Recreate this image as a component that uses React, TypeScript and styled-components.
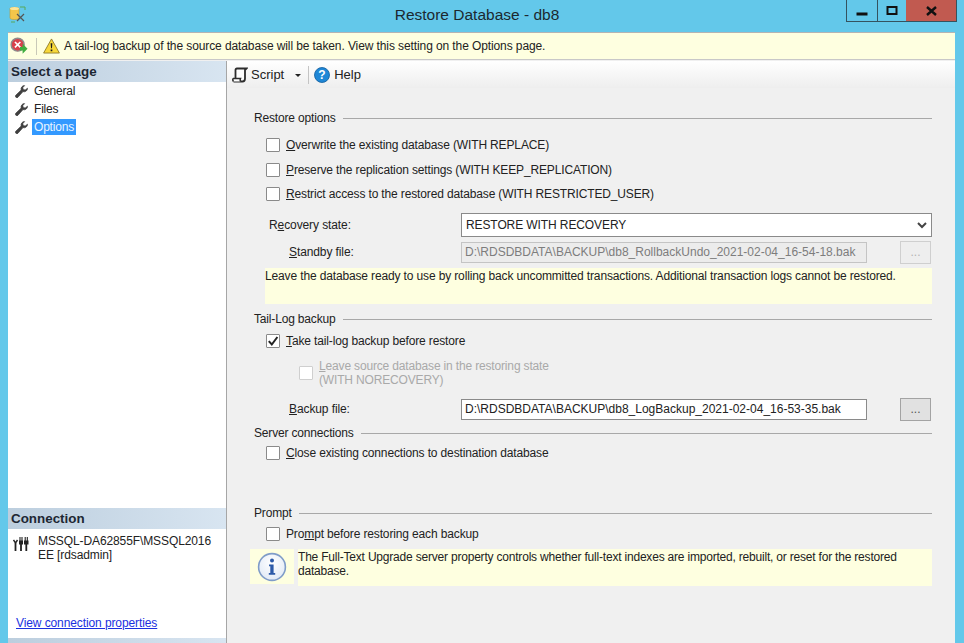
import React from 'react';
import styled, {createGlobalStyle} from 'styled-components';

const GlobalStyle = createGlobalStyle`
  html, body {
    margin: 0;
    padding: 0;
    background: #63c8ea;
  }
  * {
    box-sizing: border-box;
  }
`
const Screen = styled('div')`
  width: 964px;
  height: 643px;
  overflow: hidden;
  display: flex;
  flex-direction: column;
  background: #63c8ea;
  font-family: "Liberation Sans", Arial, sans-serif;
  font-size: 12px;
  color: #222;
`
const TitleBar = styled('div')`
  height: 32px;
  flex: none;
  display: flex;
  align-items: flex-start;
  padding: 5px 7px 0 9px;
`
const Title = styled('div')`
  flex: 1;
  padding: 1px 0 0 81px;
  text-align: center;
  font-size: 15.5px;
  color: #1c2830;
`
const WindowControls = styled('div')`
  display: flex;
  margin-top: -5px;
  height: 22px;
  border: 1px solid #34535f;
  border-top: 0;
`
const ControlButton = styled('div')<{$width: number; $close?: boolean}>`
  width: ${p => p.$width}px;
  display: flex;
  align-items: center;
  justify-content: center;
  background: ${p => p.$close ? '#c15a50' : 'transparent'};
  border-left: ${p => p.$close ? '0' : '1px solid #34535f'};
  &:first-child {
    border-left: 0;
  }
`
const WindowBody = styled('div')`
  flex: 1;
  min-height: 0;
  margin: 0 9px 0 8px;
  display: flex;
  flex-direction: column;
  border-top: 1px solid #b4b4b4;
  background: #f0f0f0;
`
const WarnBar = styled('div')`
  height: 27px;
  flex: none;
  display: flex;
  align-items: center;
  padding: 0 0 0 2px;
  background: #feffe0;
  border-bottom: 1px solid #c8c8c8;
`
const WarnSep = styled('div')`
  width: 1px;
  height: 17px;
  margin: 0 6px 0 8px;
  background: #c9c9b8;
`
const WarnText = styled('span')`
  margin-left: 4px;
  letter-spacing: -0.1px;
`
const Main = styled('div')`
  flex: 1;
  min-height: 0;
  display: flex;
  padding-top: 1px;
`
const SidePanel = styled('div')`
  width: 219px;
  flex: none;
  display: flex;
  flex-direction: column;
  background: #fff;
  border-right: 1px solid #a6a6a6;
`
const SideHeader = styled('div')`
  height: 21px;
  flex: none;
  display: flex;
  align-items: center;
  padding-left: 3px;
  font-size: 13.4px;
  font-weight: 700;
  color: #1d2733;
  background: linear-gradient(90deg, #bccede, #d8e5f1);
`
const PageList = styled('div')`
  flex: 1;
`
const PageRow = styled('div')`
  height: 18px;
  display: flex;
  align-items: center;
  padding-left: 7px;
`
const PageName = styled('span')<{$selected?: boolean}>`
  margin-left: 4px;
  padding: 1px 2px;
  letter-spacing: -0.2px;
  background: ${p => p.$selected ? '#3399ff' : 'transparent'};
  color: ${p => p.$selected ? '#e8f4ff' : '#222'};
`
const ConnectionInfo = styled('div')`
  height: 86px;
  flex: none;
  display: flex;
  align-items: flex-start;
  padding: 5px 0 0 5px;
`
const PlugSvg = styled('svg')`
  flex: none;
  margin-top: 3px;
`
const ConnectionText = styled('div')`
  margin-left: 9px;
  line-height: 14px;
  letter-spacing: -0.1px;
`
const LinkRow = styled('div')`
  height: 16px;
  flex: none;
  padding-left: 8px;
  line-height: 16px;
`
const PropLink = styled('a')`
  color: #1a30e0;
  text-decoration: underline;
  letter-spacing: -0.1px;
`
const BottomStrip = styled('div')`
  height: 5px;
  flex: none;
  margin-top: 7px;
  background: linear-gradient(90deg, #bccede, #d8e5f1);
`
const Content = styled('div')`
  flex: 1;
  min-width: 0;
  display: flex;
  flex-direction: column;
`
const Toolbar = styled('div')`
  height: 27px;
  flex: none;
  display: flex;
  align-items: center;
  padding-left: 5px;
  font-size: 13px;
  background: linear-gradient(180deg, #ffffff, #eeeeee);
`
const ToolLabel = styled('span')`
  margin-left: 3px;
`
const HelpLabel = styled('span')`
  margin-left: 4px;
`
const Caret = styled('span')`
  width: 0;
  height: 0;
  margin: 1px 0 0 11px;
  border: 3px solid transparent;
  border-top: 3px solid #222;
  border-bottom: 0;
`
const ToolSep = styled('div')`
  width: 1px;
  height: 18px;
  margin: 0 5px 0 7px;
  background: #c4c4c4;
`
const Form = styled('div')`
  flex: 1;
  padding: 22px 23px 0 27px;
  display: flex;
  flex-direction: column;
`
const Section = styled('div')<{$top?: number}>`
  height: 16px;
  flex: none;
  margin-top: ${p => p.$top ?? 0}px;
  display: flex;
  align-items: center;
  gap: 7px;
  letter-spacing: -0.17px;
  &::after {
    content: '';
    flex: 1;
    height: 1px;
    background: #a8a8a8;
  }
`
const CheckRow = styled('label')<{$top?: number; $height?: number}>`
  height: ${p => p.$height ?? 24}px;
  flex: none;
  margin-top: ${p => p.$top ?? 0}px;
  display: flex;
  align-items: center;
  padding-left: 12px;
`
const Check = styled('span')<{$disabled?: boolean}>`
  width: 14px;
  height: 14px;
  flex: none;
  margin-right: 6px;
  display: flex;
  align-items: center;
  justify-content: center;
  background: #fff;
  border: 1px solid ${p => p.$disabled ? '#cfcfcf' : '#8a8a8a'};
  border-radius: 1px;
`
const CheckText = styled('span')`
  letter-spacing: -0.14px;
`
const DisabledRow = styled('div')`
  height: 28px;
  flex: none;
  margin-top: 6px;
  display: flex;
  align-items: center;
  padding-left: 45px;
  line-height: 14px;
  letter-spacing: -0.16px;
  color: #a9a9a9;
`
const FieldRow = styled('div')<{$top: number; $indent: number}>`
  height: 24px;
  flex: none;
  margin-top: ${p => p.$top}px;
  display: flex;
  align-items: center;
  padding-left: ${p => p.$indent}px;
`
const FieldLabel = styled('span')`
  flex: 1;
  min-width: 0;
  letter-spacing: -0.1px;
`
const SelectBox = styled('div')`
  width: 471px;
  height: 24px;
  flex: none;
  display: flex;
  align-items: center;
  justify-content: space-between;
  padding: 0 4px;
  letter-spacing: -0.1px;
  background: #fff;
  border: 1px solid #8a8a8a;
`
const TextBox = styled('div')<{$disabled?: boolean}>`
  width: 406px;
  height: 21px;
  flex: none;
  display: flex;
  align-items: center;
  padding: 0 3px;
  white-space: nowrap;
  overflow: hidden;
  background: ${p => p.$disabled ? '#ececec' : '#fff'};
  color: ${p => p.$disabled ? '#7d7d7d' : '#222'};
  border: 1px solid ${p => p.$disabled ? '#c4c4c4' : '#8a8a8a'};
`
const BrowseButton = styled('div')<{$disabled?: boolean}>`
  width: 31px;
  height: 23px;
  flex: none;
  margin: 0 1px 0 33px;
  display: flex;
  align-items: center;
  justify-content: center;
  background: ${p => p.$disabled ? '#eeeeee' : '#e1e1e1'};
  color: ${p => p.$disabled ? '#b4b4b4' : '#555'};
  border: 1px solid ${p => p.$disabled ? '#cfcfcf' : '#a3a3a3'};
`
const NoteBox = styled('div')`
  height: 36px;
  flex: none;
  margin: 4px 0 0 11px;
  padding-top: 1px;
  background: #feffe0;
  line-height: 14px;
  letter-spacing: -0.14px;
  white-space: nowrap;
`
const InfoRow = styled('div')`
  height: 37px;
  flex: none;
  margin: 3px 0 0 -4px;
  display: flex;
`
const InfoIconCell = styled('div')`
  width: 44px;
  height: 35px;
  flex: none;
  display: flex;
  align-items: center;
  justify-content: center;
  background: #feffe0;
`
const InfoText = styled('div')`
  flex: 1;
  margin-left: 4px;
  padding-top: 1px;
  background: #feffe0;
  line-height: 14px;
  letter-spacing: -0.2px;
`

const AppIcon = () => (
    <svg width="18" height="18" viewBox="0 0 18 18">
        <path d="M1 3.5C1 2 10 2 10 3.5V13C10 15 1 15 1 13Z" fill="#f4c64a" stroke="#c49a30" strokeWidth=".6"/>
        <ellipse cx="5.5" cy="3.5" rx="4.5" ry="1.6" fill="#fbe59a"/>
        <path d="M8 9l7 7M15 9l-7 7" stroke="#555" strokeWidth="1.2"/>
        <path d="M11 2h5v3M2 17h4" fill="none" stroke="#58a858" strokeWidth="1"/>
    </svg>
)
const StopIcon = () => (
    <svg width="18" height="18" viewBox="0 0 20 20">
        <circle cx="8.5" cy="8.5" r="7.2" fill="#d9404a" stroke="#8d8d8d" strokeWidth="1.6"/>
        <path d="M5.5 5.5l6 6M11.5 5.5l-6 6" stroke="#fff" strokeWidth="1.8"/>
        <path d="M11 11h3V7.5l5.5 5.5-5.5 5.5V15h-3Z" fill="#3fae3f"/>
    </svg>
)
const WarnIcon = () => (
    <svg width="17" height="16" viewBox="0 0 18 17">
        <path d="M9 1L17.4 16H.6Z" fill="#f7d83a" stroke="#8a7320" strokeWidth=".9" strokeLinejoin="round"/>
        <path d="M8.1 5.5h1.8L9.5 11h-1ZM8.1 12.2h1.8V14H8.1Z" fill="#1c1c1c"/>
    </svg>
)
const WrenchIcon = () => (
    <svg width="13" height="13" viewBox="0 0 13 13">
        <path d="M12.5 3.2A3.4 3.4 0 0 1 8 6.6L3 12.2a1.3 1.3 0 0 1-2.2-2L6.2 5A3.4 3.4 0 0 1 9.6.6L7.8 2.6l.4 2 2 .4Z" fill="#3f3f3f" stroke="#3f3f3f" strokeWidth=".7"/>
    </svg>
)
const PlugIcon = () => (
    <PlugSvg width="16" height="15" viewBox="0 0 16 15">
        <path d="M0.5 3l2 3 2-3" fill="none" stroke="#222" strokeWidth="1.4"/>
        <path d="M1.6 6h1.8v8H1.6Z" fill="#222"/>
        <path d="M6 3.5h4v4H8.9V14H7.1V7.5H6Z" fill="#222"/>
        <path d="M11 3.5h4.5v4H14.2V14h-1.8V7.5H11Z" fill="#222"/>
        <path d="M7 0v4M9 0v4M12.2 0v4M14.3 0v4" stroke="#222" strokeWidth="1.1"/>
    </PlugSvg>
)
const ScriptIcon = () => (
    <svg width="16" height="16" viewBox="0 0 16 16">
        <path d="M5 1.5h9.5L13 3v8.5c0 1.5-1 3-2.5 3h-9C3 14.5 3.5 13 3.5 12V3C3.5 2 4 1.5 5 1.5Z" fill="#fdfdfd" stroke="#2c2c2c" strokeWidth="1.8"/>
        <path d="M1.5 14.5c-1-1-1-2.5 0-3h7c-.5 1-.5 2 0 3" fill="#fdfdfd" stroke="#2c2c2c" strokeWidth="1.5"/>
    </svg>
)
const HelpIcon = () => (
    <svg width="16" height="16" viewBox="0 0 16 16">
        <circle cx="8" cy="8" r="7.5" fill="#1f87d6" stroke="#0f5c9c" strokeWidth=".8"/>
        <text x="8" y="12.4" textAnchor="middle" fontSize="12" fontWeight="700" fontFamily="Liberation Sans" fill="#fff">?</text>
    </svg>
)
const InfoIcon = () => (
    <svg width="30" height="30" viewBox="0 0 30 30">
        <defs>
            <radialGradient id="infoFill" cx="50%" cy="35%" r="70%">
                <stop offset="0%" stopColor="#ffffff"/>
                <stop offset="100%" stopColor="#dfe8f5"/>
            </radialGradient>
        </defs>
        <circle cx="15" cy="15" r="13.4" fill="url(#infoFill)" stroke="#7f9cc8" strokeWidth="1.6"/>
        <circle cx="15" cy="8.6" r="2" fill="#2c5aa8"/>
        <path d="M12 12.5h4.6V21h1.6v1.8h-6.4V21h1.5v-6.7H12Z" fill="#2c5aa8"/>
    </svg>
)
const Tick = () => (
    <svg width="12" height="12" viewBox="0 0 12 12">
        <path d="M1.8 6.2L4.8 9.5 10.4 2" fill="none" stroke="#222" strokeWidth="2"/>
    </svg>
)
const Chevron = () => (
    <svg width="10" height="7" viewBox="0 0 10 7">
        <path d="M1 1l4 4 4-4" fill="none" stroke="#444" strokeWidth="2"/>
    </svg>
)

const CheckItem = ({label, rest, checked, top, height}: CheckItemPropsType) => (
    <CheckRow $top={top} $height={height}>
        <Check>{checked && <Tick/>}</Check>
        <CheckText>{label}{rest}</CheckText>
    </CheckRow>
)

const App = () => {
    return (
        <Screen>
            <GlobalStyle/>
            <TitleBar>
                <AppIcon/>
                <Title>Restore Database - db8</Title>
                <WindowControls>
                    <ControlButton $width={30}>
                        <svg width="12" height="12" viewBox="0 0 12 12"><path d="M.5 9h11" stroke="#111" strokeWidth="3"/></svg>
                    </ControlButton>
                    <ControlButton $width={29}>
                        <svg width="12" height="12" viewBox="0 0 12 12"><rect x="1.5" y="2" width="9" height="7" fill="none" stroke="#111" strokeWidth="2"/></svg>
                    </ControlButton>
                    <ControlButton $width={50} $close>
                        <svg width="11" height="10" viewBox="0 0 11 10"><path d="M1 1l9 8M10 1l-9 8" stroke="#111" strokeWidth="2.4"/></svg>
                    </ControlButton>
                </WindowControls>
            </TitleBar>
            <WindowBody>
                <WarnBar>
                    <StopIcon/>
                    <WarnSep/>
                    <WarnIcon/>
                    <WarnText>A tail-log backup of the source database will be taken. View this setting on the Options page.</WarnText>
                </WarnBar>
                <Main>
                    <SidePanel>
                        <SideHeader>Select a page</SideHeader>
                        <PageList>
                            <PageRow><WrenchIcon/><PageName>General</PageName></PageRow>
                            <PageRow><WrenchIcon/><PageName>Files</PageName></PageRow>
                            <PageRow><WrenchIcon/><PageName $selected>Options</PageName></PageRow>
                        </PageList>
                        <SideHeader>Connection</SideHeader>
                        <ConnectionInfo>
                            <PlugIcon/>
                            <ConnectionText>MSSQL-DA62855F\MSSQL2016<br/>EE [rdsadmin]</ConnectionText>
                        </ConnectionInfo>
                        <LinkRow><PropLink>View connection properties</PropLink></LinkRow>
                        <BottomStrip/>
                    </SidePanel>
                    <Content>
                        <Toolbar>
                            <ScriptIcon/>
                            <ToolLabel>Script</ToolLabel>
                            <Caret/>
                            <ToolSep/>
                            <HelpIcon/>
                            <HelpLabel>Help</HelpLabel>
                        </Toolbar>
                        <Form>
                            <Section>Restore options</Section>
                            <CheckItem top={7} height={24.5} label={<u>O</u>} rest="verwrite the existing database (WITH REPLACE)"/>
                            <CheckItem height={24.5} label={<u>P</u>} rest="reserve the replication settings (WITH KEEP_REPLICATION)"/>
                            <CheckItem height={24.5} label={<u>R</u>} rest="estrict access to the restored database (WITH RESTRICTED_USER)"/>
                            <FieldRow $top={6.5} $indent={15}>
                                <FieldLabel>R<u>e</u>covery state:</FieldLabel>
                                <SelectBox>RESTORE WITH RECOVERY<Chevron/></SelectBox>
                            </FieldRow>
                            <FieldRow $top={3} $indent={35}>
                                <FieldLabel><u>S</u>tandby file:</FieldLabel>
                                <TextBox $disabled>D:\RDSDBDATA\BACKUP\db8_RollbackUndo_2021-02-04_16-54-18.bak</TextBox>
                                <BrowseButton $disabled>...</BrowseButton>
                            </FieldRow>
                            <NoteBox>Leave the database ready to use by rolling back uncommitted transactions. Additional transaction logs cannot be restored.</NoteBox>
                            <Section $top={7}>Tail-Log backup</Section>
                            <CheckItem top={2} checked label={<u>T</u>} rest="ake tail-log backup before restore"/>
                            <DisabledRow>
                                <Check $disabled/>
                                <span><u>L</u>eave source database in the restoring state<br/>(WITH NORECOVERY)</span>
                            </DisabledRow>
                            <FieldRow $top={10} $indent={35}>
                                <FieldLabel><u>B</u>ackup file:</FieldLabel>
                                <TextBox>D:\RDSDBDATA\BACKUP\db8_LogBackup_2021-02-04_16-53-35.bak</TextBox>
                                <BrowseButton>...</BrowseButton>
                            </FieldRow>
                            <Section $top={4}>Server connections</Section>
                            <CheckItem label={<u>C</u>} rest="lose existing connections to destination database"/>
                            <Section $top={40}>Prompt</Section>
                            <CheckRow $top={1}>
                                <Check/>
                                <CheckText>Pro<u>m</u>pt before restoring each backup</CheckText>
                            </CheckRow>
                            <InfoRow>
                                <InfoIconCell><InfoIcon/></InfoIconCell>
                                <InfoText>The Full-Text Upgrade server property controls whether full-text indexes are imported, rebuilt, or reset for the restored database.</InfoText>
                            </InfoRow>
                        </Form>
                    </Content>
                </Main>
            </WindowBody>
        </Screen>
    );
};

export default App;

type CheckItemPropsType = {
    label: React.ReactNode
    rest: string
    checked?: boolean
    top?: number
    height?: number
}
